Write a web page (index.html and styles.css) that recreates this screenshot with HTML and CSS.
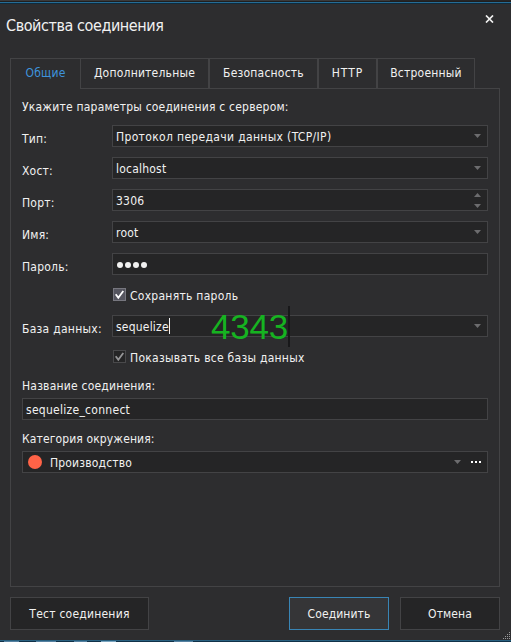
FILE: index.html
```
<!DOCTYPE html>
<html lang="ru">
<head>
<meta charset="utf-8">
<title>Свойства соединения</title>
<link rel="stylesheet" href="styles.css">
</head>
<body>
<div class="dialog">
  <header class="titlebar">
    <h1>Свойства соединения</h1>
    <svg class="close" width="9" height="8" viewBox="0 0 9 8"><path d="M1 .5l7 7M8 .5l-7 7"/></svg>
  </header>
  <nav class="tabs">
    <div class="tab tab-general active"><span>Общие</span></div>
    <div class="tab tab-advanced"><span>Дополнительные</span></div>
    <div class="tab tab-security"><span>Безопасность</span></div>
    <div class="tab tab-http"><span>HTTP</span></div>
    <div class="tab tab-embedded"><span>Встроенный</span></div>
  </nav>
  <main class="panel">
    <p class="intro">Укажите параметры соединения с сервером:</p>
    <div class="row"><label>Тип:</label><div class="field"><span class="protocol">Протокол передачи данных (TCP/IP)</span><svg class="arrow" width="7" height="4"><path d="M0 0h7L3.5 4z"/></svg></div></div>
    <div class="row"><label>Хост:</label><div class="field"><span>localhost</span><svg class="arrow" width="7" height="4"><path d="M0 0h7L3.5 4z"/></svg></div></div>
    <div class="row"><label>Порт:</label><div class="field"><span>3306</span><svg class="arrow spin" width="7" height="15"><path d="M0 4h7L3.5 0zM0 11h7L3.5 15z"/></svg></div></div>
    <div class="row"><label>Имя:</label><div class="field"><span>root</span><svg class="arrow" width="7" height="4"><path d="M0 0h7L3.5 4z"/></svg></div></div>
    <div class="row"><label>Пароль:</label><div class="field"><span class="dots"><i></i><i></i><i></i><i></i></span></div></div>
    <div class="check"><svg class="box on" width="13" height="13"><rect x=".5" y=".5" width="12" height="12"/><path d="M2.7 6.3l2.6 3.5 5-6.8"/></svg><span class="save">Сохранять пароль</span></div>
    <div class="row"><label class="db-label">База данных:</label><div class="field"><span>sequelize</span><b class="caret"></b><svg class="arrow" width="7" height="4"><path d="M0 0h7L3.5 4z"/></svg></div><div class="note">4343</div></div>
    <div class="check"><svg class="box" width="13" height="13"><rect x=".5" y=".5" width="12" height="12"/><path d="M2.7 6.3l2.6 3.5 5-6.8"/></svg><span class="show">Показывать все базы данных</span></div>
    <p class="caption name">Название соединения:</p>
    <div class="field"><span class="conn">sequelize_connect</span></div>
    <p class="caption category">Категория окружения:</p>
    <div class="field env"><b class="dot"></b><span class="env-name">Производство</span><svg class="arrow" width="7" height="4"><path d="M0 0h7L3.5 4z"/></svg><svg class="more" width="10" height="2"><path d="M0 0h2v2H0zM4 0h2v2H4zM8 0h2v2H8z"/></svg></div>
  </main>
  <footer>
    <button class="test"><span>Тест соединения</span></button>
    <button class="connect"><span>Соединить</span></button>
    <button class="cancel"><span>Отмена</span></button>
  </footer>
  <svg class="grip" width="8" height="8"><path d="M6 0h1v1H6zM4 2h1v1H4zM6 2h1v1H6zM2 4h1v1H2zM4 4h1v1H4zM6 4h1v1H6zM0 6h1v1H0zM2 6h1v1H2zM4 6h1v1H4zM6 6h1v1H6z"/></svg>
  <div class="desktop"></div>
</div>
</body>
</html>
```
FILE: styles.css
```
* { box-sizing: border-box; }
body { margin: 0; background: #2d2d2f; color: #f1f1f1; font: 12px/16px "DejaVu Sans Condensed", "DejaVu Sans", sans-serif; letter-spacing: .21px; }
h1, p { margin: 0; font-weight: normal; }
span, label, p, h1 { white-space: nowrap; }
.dialog { position: relative; width: 511px; height: 642px; overflow: hidden; padding: 2px 11px 0 10px; background: linear-gradient(90deg, #3a3a3b 390px, #252526 390px) 0 0 / 100% 1px no-repeat, linear-gradient(#1f1f20 2px, #256c96 2px, #256c96 3px, #102b3c 3px, #102b3c 4px, #2d2d2f 4px); }
.titlebar { display: flex; justify-content: space-between; height: 56px; margin-left: -4px; }
h1 { font-size: 16px; line-height: 20px; margin-top: 14px; letter-spacing: -.42px; }
.close { margin: 13px 6px 0 0; fill: none; stroke: #f1f1f1; stroke-width: 1.7; }
.tabs { display: flex; height: 31px; }
.tab { border: 1px solid #434345; text-align: center; padding-top: 6px; }
.tab.active { border-bottom: 0; border-right: 0; color: #3e93dc; }
.tab-general { width: 70px; }
.tab-advanced { width: 129px; }
.tab-security { width: 109px; }
.tab-http { width: 59px; letter-spacing: 1px; }
.tab-embedded { width: 98px; }
.panel { height: 499px; margin-top: -1px; padding: 11px 11px 0; border: 1px solid #434345; border-top: 0; background: linear-gradient(#434345, #434345) 70px 0 / 419px 1px no-repeat; }
.intro { height: 26px; }
.row { display: flex; height: 22px; margin-bottom: 10px; position: relative; }
label { width: 90px; padding-top: 6px; }
.db-label { letter-spacing: .28px; }
.protocol { letter-spacing: .34px; }
.field { flex: 1; display: flex; height: 22px; border: 1px solid #434345; background: #252526; padding: 3px 6px 0 3px; }
.arrow { margin: 5px 0 0 auto; fill: #6c6c6e; }
.arrow.spin { margin-top: 0; }
.dots { display: flex; gap: 2px; margin: 5px 0 0 1px; }
.dots i { width: 6px; height: 6px; border-radius: 50%; background: #f1f1f1; }
.check { display: flex; height: 17px; margin: 13px 0 10px 91px; }
.box { margin-right: 4px; fill: #252526; stroke: #49494b; }
.box path { fill: none; stroke: #969698; stroke-width: 1.8; }
.box.on { fill: #55555f; stroke: #77777f; }
.box.on path { stroke: #fff; }
.save, .show { letter-spacing: .27px; }
.caret { width: 1px; height: 16px; background: #f1f1f1; margin-top: -1px; }
.note { position: absolute; left: 189px; top: -9px; height: 41px; border-right: 2px solid #18181a; color: #16b321; font: 35px/41px "Liberation Sans", sans-serif; letter-spacing: -.2px; }
.caption { height: 20px; }
.name { margin-top: 11px; }
.category { margin-top: 11px; height: 20px; letter-spacing: .12px; }
.conn { letter-spacing: .28px; }
.env-name { letter-spacing: .18px; }
.dot { width: 14px; height: 14px; border-radius: 50%; background: #ff6347; margin: 0 8px 0 1px; }
.panel > .env { padding: 3px 6px 0 4px; }
.more { fill: #fff; margin: 6px 0 0 10px; }
footer { display: flex; margin-top: 10px; height: 33px; }
button { padding: 0; border: 1px solid #434345; background: #252526; color: inherit; font: inherit; letter-spacing: .1px; }
.test { width: 139px; letter-spacing: .23px; }
.connect { width: 100px; margin: 0 11px 0 auto; background: #353537; border-color: #3985b5; }
.cancel { width: 100px; }
.grip { position: absolute; right: 0; bottom: 2px; fill: #98989a; }
.desktop { position: absolute; left: 0; right: 0; bottom: 0; height: 2px; border-top: 1px solid #286080; background: linear-gradient(90deg, #103249 4px, #5681a0 4px 19px, #103249 19px 36px, #5681a0 36px 56px, #103249 56px 74px, #5681a0 74px 87px, #103249 87px 101px, #79a4bf 101px 116px, #103249 116px 174px, #5681a0 174px 193px, #103249 193px); }
```
